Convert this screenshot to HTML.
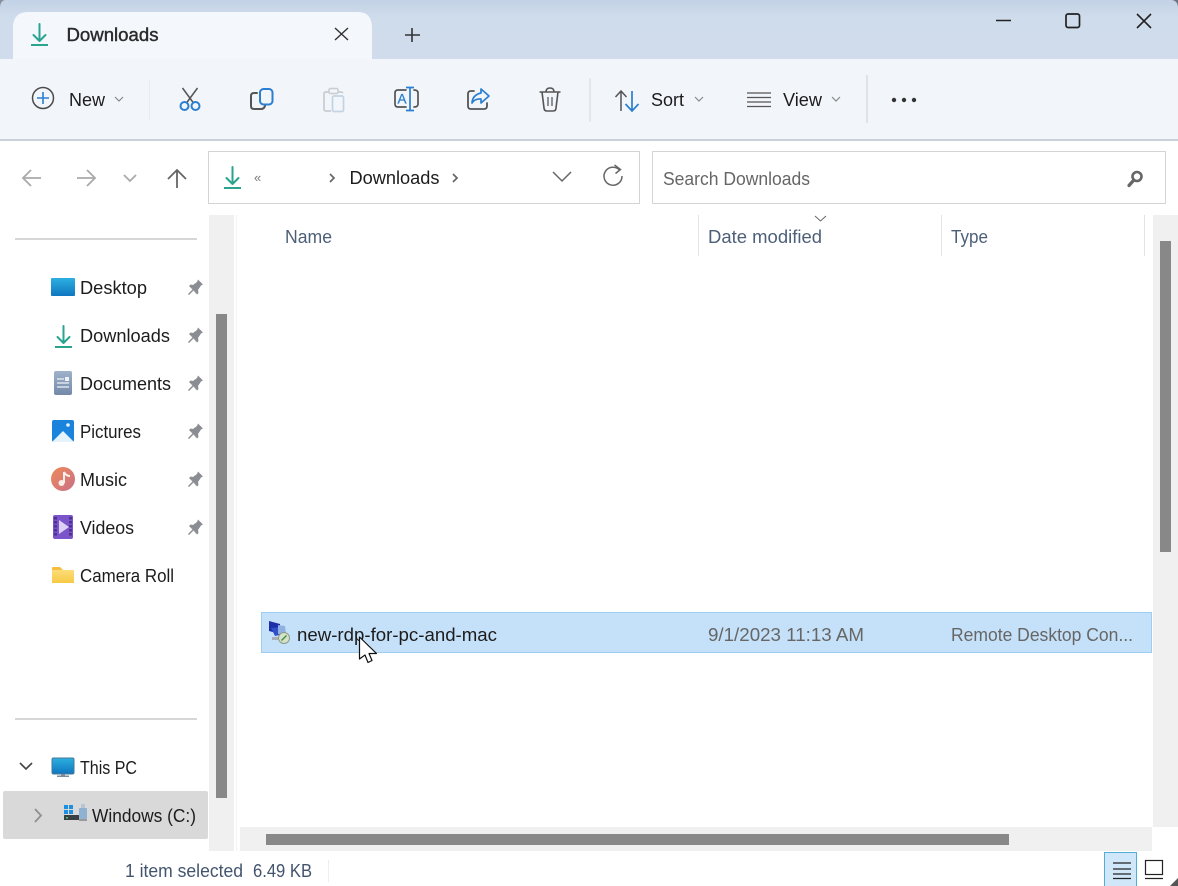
<!DOCTYPE html>
<html><head><meta charset="utf-8"><title>Downloads</title>
<style>
html,body{margin:0;padding:0;background:#fff;width:1178px;height:886px;overflow:hidden}
svg{display:block;filter:blur(.3px)}
text{font-family:"Liberation Sans",sans-serif;font-size:18px;fill:#1c1c1c}
.h{fill:#4d5f78}.s{fill:#43546e}.g{fill:#666}
.bl{fill:none;stroke:#2a7fd0;stroke-width:2;stroke-linecap:round;stroke-linejoin:round}
</style></head><body>
<svg width="1178" height="886" viewBox="0 0 1178 886" xmlns="http://www.w3.org/2000/svg">
<defs>
<linearGradient id="top" x1="0" y1="0" x2="0" y2="1"><stop offset="0" stop-color="#c3d2e6"/><stop offset=".3" stop-color="#cfdcec"/><stop offset="1" stop-color="#d0dcec"/></linearGradient>
<linearGradient id="desk" x1="0" y1="0" x2="0" y2="1"><stop offset="0" stop-color="#2cb0e0"/><stop offset="1" stop-color="#0f76c0"/></linearGradient>
<linearGradient id="fold" x1="0" y1="0" x2="0" y2="1"><stop offset="0" stop-color="#fcdc78"/><stop offset="1" stop-color="#f6c945"/></linearGradient>
<linearGradient id="mus" x1="0" y1="0" x2="1" y2="1"><stop offset="0" stop-color="#ee8a58"/><stop offset="1" stop-color="#c96f88"/></linearGradient>
<linearGradient id="doc" x1="0" y1="0" x2="0" y2="1"><stop offset="0" stop-color="#9fb2ca"/><stop offset="1" stop-color="#7389a8"/></linearGradient>
<g id="pin"><path d="M2-7.500L7-2.500 5-1.500 2 3 2.500 6 1 7.500-2.500 3.500-7 8-8 7-3.500 2.500-7-1-5.500-2.500-3-2 1-5z" fill="#8a8d92"/></g>
<g id="dl"><path d="M8.500 1v17M2.500 12l6 6 6-6" fill="none" stroke="#2aa48f" stroke-width="2" stroke-linecap="round" stroke-linejoin="round"/><path d="M0 22h17" stroke="#2aa48f" stroke-width="2"/></g>
</defs>

<!-- Title bar -->
<rect width="1178" height="59" fill="url(#top)"/>
<path d="M0 0h5Q0 1 0 8z" fill="#888f9a"/>
<path d="M1178 0h-6q6 1 6 8z" fill="#6e7480"/>
<!-- Tab -->
<path d="M13 59V26Q14 12 28 12H358Q371 12 372 26V59z" fill="#f4f7fc"/>
<use href="#dl" x="31" y="23"/>
<text x="66.500" y="41" textLength="92" lengthAdjust="spacingAndGlyphs" style="fill:#2a2a2a;stroke:#2a2a2a;stroke-width:.4">Downloads</text>
<path d="M335 28l13 12M348 28l-13 12" fill="none" stroke="#333" stroke-width="1.400"/>
<path d="M412 28v14M405 35h15" fill="none" stroke="#333" stroke-width="1.600"/>
<!-- Window buttons -->
<path d="M996 20.500h15" stroke="#222" stroke-width="1.500"/>
<rect x="1066" y="14" width="13.500" height="13.500" rx="2" fill="none" stroke="#222" stroke-width="1.700"/>
<path d="M1137 14l14 14M1151 14l-14 14" fill="none" stroke="#222" stroke-width="1.600"/>

<!-- Toolbar -->
<rect y="59" width="1178" height="80" fill="#f2f5fa"/>
<rect y="139" width="1178" height="2" fill="#c9d0da"/>
<circle cx="43" cy="98" r="10.500" fill="none" stroke="#4a4a4a" stroke-width="1.500"/>
<path d="M43 92v12M37 98h12" stroke="#2a7fd0" stroke-width="1.600"/>
<text x="69" y="106" textLength="36" lengthAdjust="spacingAndGlyphs">New</text>
<path d="M115 97l4 4 4-4" fill="none" stroke="#888" stroke-width="1.200"/>
<rect x="149" y="80" width="1" height="40" fill="#e8ebf0"/>
<!-- cut -->
<path d="M182.500 88l11 15M197.500 88l-11 15" fill="none" stroke="#555" stroke-width="1.500"/>
<circle cx="184.500" cy="106" r="4" class="bl"/><circle cx="195.500" cy="106" r="4" class="bl"/>
<!-- copy -->
<path d="M257 93h-3q-3 0-3 3v10q0 3 3 3h7q3 0 4-3" fill="none" stroke="#555" stroke-width="2" stroke-linecap="round"/>
<rect x="260" y="89" width="12.500" height="15.500" rx="3.500" class="bl"/>
<!-- paste disabled -->
<path d="M329 92h-3q-2 0-2 2v15q0 2 2 2h5M338 92h3q1 0 2 1" fill="none" stroke="#c9ccd1" stroke-width="1.700"/>
<rect x="329" y="88.500" width="9" height="5" rx="1.500" fill="none" stroke="#c9ccd1" stroke-width="1.500"/>
<rect x="332.500" y="96" width="11" height="15.500" rx="1.500" fill="none" stroke="#c4d3e4" stroke-width="1.700"/>
<!-- rename -->
<path d="M406 90h-8q-3 0-3 3v11q0 3 3 3h8M414 90q4 0 4 3v11q0 3-4 3" fill="none" stroke="#555" stroke-width="1.700" stroke-linecap="round"/>
<path d="M410 87.500v23M406 87.500h8M406 110.500h8" fill="none" stroke="#2a7fd0" stroke-width="1.700"/>
<text x="397.500" y="103.500" style="font-size:13.500px;fill:#2a7fd0;stroke:#2a7fd0;stroke-width:.3">A</text>
<!-- share -->
<path d="M474 91h-3q-3 0-3 3v12q0 3 3 3h13q3 0 3-3v-3" fill="none" stroke="#555" stroke-width="1.800" stroke-linecap="round"/>
<path d="M481 89l8 7-8 7v-4q-6-.5-9 4 .5-8 9-10z" class="bl" style="stroke-width:1.700"/>
<!-- delete -->
<path d="M539.500 92h21M542 92l2 16q.3 3 3 3h6q3 0 3-3l2-16M546 92q0-4 4-4t4 4" fill="none" stroke="#555" stroke-width="1.600"/>
<path d="M548 97v9M552 97v9" stroke="#666" stroke-width="1.400"/>
<rect x="589" y="78" width="2" height="44" fill="#e3e7ed"/>
<!-- sort -->
<path d="M621 91v20M615.500 97l5.500-6 5.500 6" fill="none" stroke="#555" stroke-width="1.500"/>
<path d="M632 91v20M625.500 104l6.500 7 6.500-7" fill="none" stroke="#2a7fd0" stroke-width="1.700"/>
<text x="651" y="106" textLength="33" lengthAdjust="spacingAndGlyphs">Sort</text>
<path d="M695 97l4 4 4-4" fill="none" stroke="#888" stroke-width="1.200"/>
<!-- view -->
<path d="M747 93h24M747 97.500h24M747 102h24M747 106.500h24" stroke="#555" stroke-width="1.300"/>
<text x="783" y="106" textLength="39" lengthAdjust="spacingAndGlyphs">View</text>
<path d="M832 97l4 4 4-4" fill="none" stroke="#888" stroke-width="1.200"/>
<rect x="866" y="75" width="2" height="48" fill="#dfe3e9"/>
<circle cx="894" cy="100" r="2.200" fill="#333"/><circle cx="904" cy="100" r="2.200" fill="#333"/><circle cx="914" cy="100" r="2.200" fill="#333"/>

<!-- Nav -->
<path d="M41 178H24M31 170l-8 8 8 8" fill="none" stroke="#aaa" stroke-width="1.800"/>
<path d="M77 178h17M87 170l8 8-8 8" fill="none" stroke="#aaa" stroke-width="1.800"/>
<path d="M124 175l6 6 6-6" fill="none" stroke="#aaa" stroke-width="1.800"/>
<path d="M177 188V171M168 179l9-9 9 9" fill="none" stroke="#666" stroke-width="1.800"/>
<!-- Address -->
<rect x="208.500" y="151.500" width="431" height="52" fill="#fff" stroke="#d4d4d4"/>
<use href="#dl" x="224" y="166"/>
<text x="254" y="182" style="font-size:13px;fill:#777">«</text>
<path d="M330 174l4 4-4 4" fill="none" stroke="#666" stroke-width="1.700"/>
<text x="349.500" y="184" textLength="90" lengthAdjust="spacingAndGlyphs">Downloads</text>
<path d="M453 174l4 4-4 4" fill="none" stroke="#666" stroke-width="1.700"/>
<path d="M553 172l9 9 9-9" fill="none" stroke="#666" stroke-width="1.500"/>
<path d="M619.500 170a9 9 0 1 0 2.500 6" fill="none" stroke="#666" stroke-width="1.500"/>
<path d="M614.500 165l6 4.500-5 4" fill="none" stroke="#666" stroke-width="1.500"/>
<!-- Search -->
<rect x="652.500" y="151.500" width="513" height="52" fill="#fff" stroke="#d4d4d4"/>
<text x="663" y="185" textLength="147" lengthAdjust="spacingAndGlyphs" class="g">Search Downloads</text>
<circle cx="1137" cy="176.500" r="4.500" fill="none" stroke="#666" stroke-width="2.600"/>
<path d="M1133 181l-4 4.500" stroke="#666" stroke-width="3.200" stroke-linecap="round"/>

<!-- Separators -->
<rect x="15" y="238" width="182" height="2" fill="#d6d6d6"/>
<rect x="15" y="718" width="182" height="2" fill="#d6d6d6"/>

<!-- Sidebar scrollbar -->
<rect x="209" y="215" width="25" height="636" fill="#f0f0f0"/>
<rect x="216" y="314" width="11" height="484" fill="#888"/>
<rect x="236" y="215" width="1" height="636" fill="#f4f4f4"/>

<!-- Sidebar items -->
<rect x="51" y="278" width="24" height="18" rx="1" fill="url(#desk)"/>
<text x="80" y="294" textLength="67" lengthAdjust="spacingAndGlyphs">Desktop</text>
<use href="#pin" x="196" y="287"/>

<use href="#dl" x="55" y="325"/>
<text x="80" y="342" textLength="90" lengthAdjust="spacingAndGlyphs">Downloads</text>
<use href="#pin" x="196" y="335"/>

<rect x="54" y="371" width="18" height="24" rx="2" fill="url(#doc)"/>
<path d="M57 379h7M57 383h12M57 387h12" stroke="#eef2f7" stroke-width="1.300"/><rect x="65" y="377" width="4" height="4" fill="#eef2f7"/>
<text x="80" y="390" textLength="91" lengthAdjust="spacingAndGlyphs">Documents</text>
<use href="#pin" x="196" y="383"/>

<rect x="52" y="420" width="22" height="22" rx="2" fill="#1a84dd"/>
<path d="M52 442l11-11 11 11z" fill="#e4f2fc"/><circle cx="68" cy="425" r="1.800" fill="#e4f2fc"/>
<text x="80" y="438" textLength="61" lengthAdjust="spacingAndGlyphs">Pictures</text>
<use href="#pin" x="196" y="431"/>

<circle cx="63" cy="479" r="12" fill="url(#mus)"/>
<path d="M64 472v11" stroke="#fbeee8" stroke-width="2"/><path d="M64 472q2 4 6 4" fill="none" stroke="#fbeee8" stroke-width="2"/><circle cx="61.500" cy="483" r="3" fill="#fbeee8"/>
<text x="80" y="486" textLength="47" lengthAdjust="spacingAndGlyphs">Music</text>
<use href="#pin" x="196" y="479"/>

<rect x="53" y="515" width="20" height="24" rx="2" fill="#7a54c8"/>
<path d="M55.500 517v20M70.500 517v20" stroke="#4e3195" stroke-width="3" stroke-dasharray="2.500 1.500"/>
<path d="M59 520l10 7-10 7z" fill="#dcd0f6"/>
<text x="80" y="534" textLength="54" lengthAdjust="spacingAndGlyphs">Videos</text>
<use href="#pin" x="196" y="527"/>

<path d="M52 568q0-1 1-1h7l3 3h11v13H52z" fill="#f4bd3b"/><rect x="52" y="570" width="22" height="13" fill="url(#fold)"/>
<text x="80" y="582" textLength="94" lengthAdjust="spacingAndGlyphs">Camera Roll</text>

<path d="M20 763l6 6 6-6" fill="none" stroke="#444" stroke-width="1.600"/>
<rect x="52" y="758" width="22" height="16" rx="1.500" fill="url(#desk)" stroke="#477898" stroke-width="1"/>
<rect x="61" y="774" width="4" height="2" fill="#7c8c9c"/><rect x="57" y="775.500" width="12" height="1.500" fill="#7c8c9c"/>
<text x="80" y="774" textLength="57" lengthAdjust="spacingAndGlyphs">This PC</text>

<rect x="3" y="791" width="205" height="48" rx="2" fill="#d9d9d9"/>
<path d="M35 809l6 6.500-6 6.500" fill="none" stroke="#909090" stroke-width="1.800"/>
<rect x="64" y="805" width="4" height="4" fill="#1d8ee0"/><rect x="69" y="805" width="4" height="4" fill="#1d8ee0"/><rect x="64" y="810" width="4" height="4" fill="#1d8ee0"/><rect x="69" y="810" width="4" height="4" fill="#1d8ee0"/>
<rect x="64" y="815" width="15" height="5" fill="#3a3f44"/><rect x="66" y="817" width="2" height="1.500" fill="#38d060"/>
<rect x="79" y="808" width="8" height="11" rx="1" fill="#8fb1d2"/><rect x="81" y="804" width="4" height="4" fill="#b8c6d4"/><rect x="79" y="819" width="8" height="2" fill="#9a9a9a"/>
<text x="92" y="822" textLength="104" lengthAdjust="spacingAndGlyphs">Windows (C:)</text>

<!-- Header -->
<text x="285" y="243" textLength="47" lengthAdjust="spacingAndGlyphs" class="h">Name</text>
<text x="708" y="243" textLength="114" lengthAdjust="spacingAndGlyphs" class="h">Date modified</text>
<text x="951" y="243" textLength="37" lengthAdjust="spacingAndGlyphs" class="h">Type</text>
<rect x="698" y="215" width="1" height="41" fill="#e3e3e3"/>
<rect x="941" y="215" width="1" height="41" fill="#e3e3e3"/>
<rect x="1144" y="215" width="1" height="41" fill="#e3e3e3"/>
<path d="M815 216l5.500 5 5.500-5" fill="none" stroke="#666" stroke-width="1"/>

<!-- Main scrollbars -->
<rect x="1153" y="215" width="25" height="612" fill="#f0f0f0"/>
<rect x="1160" y="241" width="11" height="311" fill="#888"/>
<rect x="240" y="827" width="912" height="24" fill="#f0f0f0"/>
<rect x="266" y="834" width="743" height="11" fill="#888"/>

<!-- Selected row -->
<rect x="261.500" y="612.500" width="890" height="40" fill="#c5e1f9" stroke="#9fcdf0"/>
<path d="M269 621l11 3v10l-11-3z" fill="#1c2ea8"/><path d="M271 628l10-1 3 7-9 2z" fill="#3050c8"/>
<path d="M278 625l7 1 1 8-8 0z" fill="#8fb0e0"/>
<circle cx="284" cy="638" r="5.500" fill="#d6e2c8" stroke="#8a9a88"/>
<path d="M281.500 640.500l5-5" stroke="#3c8a3c" stroke-width="1.300"/>
<path d="M272 637h6v3h-6z" fill="#a8aeb8"/>
<text x="297" y="641" textLength="200" lengthAdjust="spacingAndGlyphs">new-rdp-for-pc-and-mac</text>
<text x="708" y="641" textLength="156" lengthAdjust="spacingAndGlyphs" class="g">9/1/2023 11:13 AM</text>
<text x="951" y="641" textLength="182" lengthAdjust="spacingAndGlyphs" class="g">Remote Desktop Con...</text>
<!-- Cursor -->
<path d="M359.500 637V659L365 655 368 662.500 372 660.500 369 653.500H376.500Z" fill="#fff" stroke="#111" stroke-width="1.200" stroke-linejoin="round"/>

<!-- Status bar -->
<text x="125" y="877" textLength="118" lengthAdjust="spacingAndGlyphs" class="s">1 item selected</text>
<text x="253" y="877" textLength="59" lengthAdjust="spacingAndGlyphs" class="s">6.49 KB</text>
<rect x="328" y="860" width="1" height="22" fill="#eee"/>
<rect x="1104.500" y="852.500" width="32" height="34" fill="#cfe7f9" stroke="#52add9"/>
<path d="M1113 863h18M1113 869h18M1113 874h18M1113 878.500h18" stroke="#222" stroke-width="1.200"/>
<rect x="1145.500" y="860.500" width="17" height="14" fill="none" stroke="#222" stroke-width="1.200"/>
<path d="M1145 878.500h18" stroke="#222" stroke-width="1.200"/>
<path d="M1178 878v8h-8z" fill="#555"/>
</svg>
</body></html>
